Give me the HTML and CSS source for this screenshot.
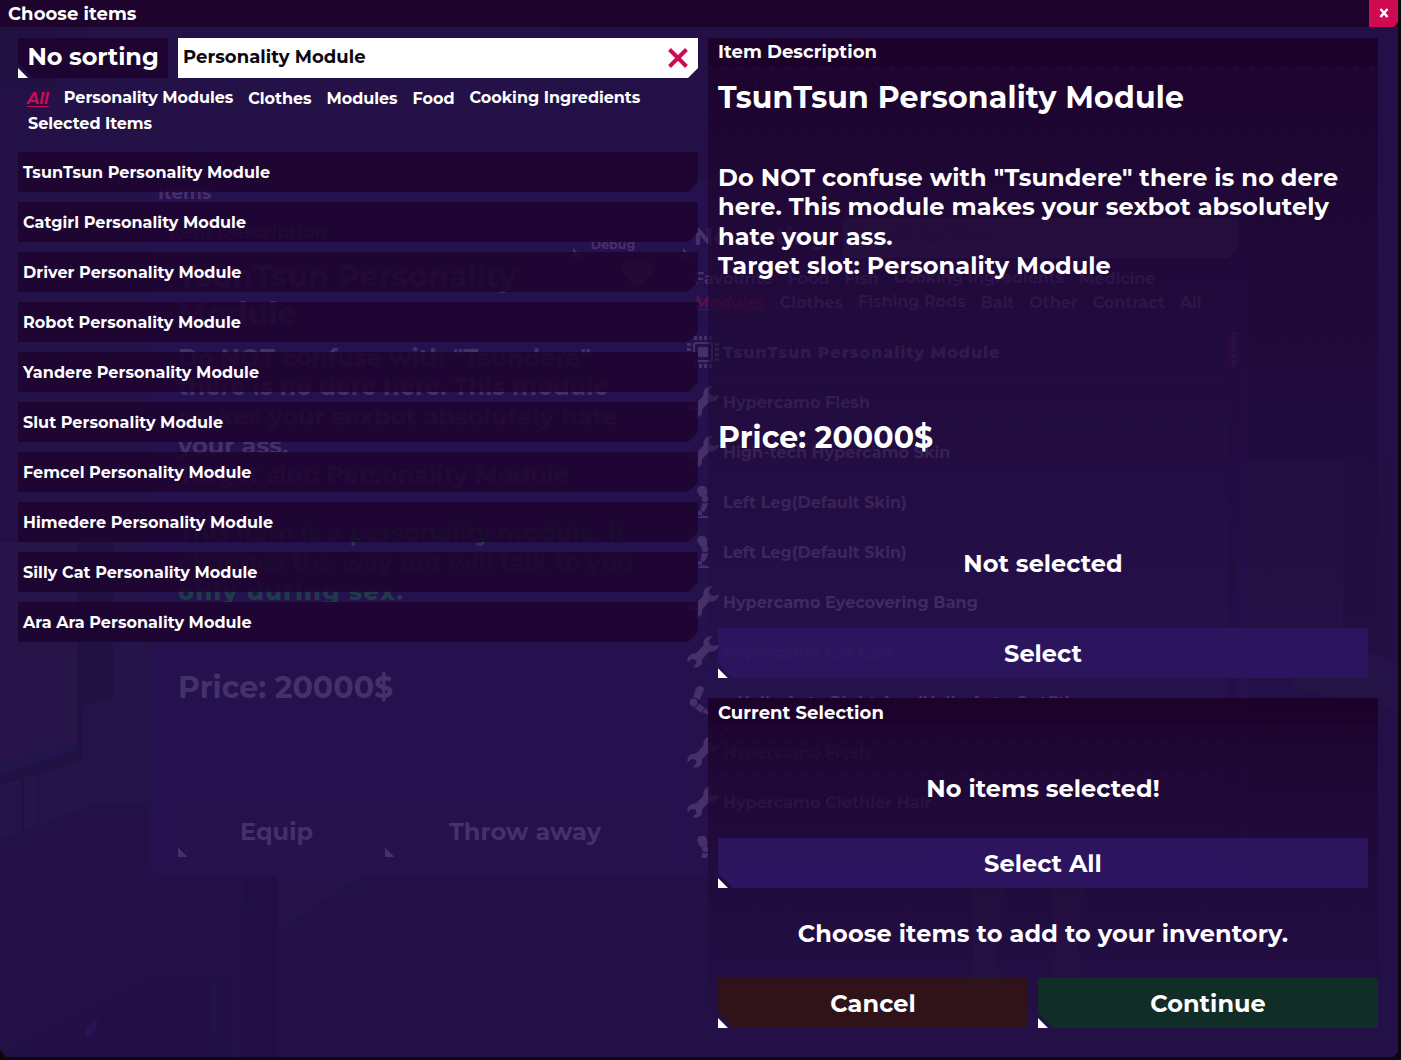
FILE: index.html
```html
<!DOCTYPE html>
<html lang="en">
<head>
<meta charset="utf-8">
<title>Choose items</title>
<link rel="stylesheet" href="styles.css">
</head>
<body>
<svg class="symbols" width="0" height="0" aria-hidden="true">
  <symbol id="wrench" viewBox="0 0 32 32">
    <path d="M32 8.500C31.500 13 27.500 16.500 22.500 15.500L15 23.500C16 28 13 32 7 31.500L5.500 31.500L9.500 27L8.500 23.500L4.500 23L0.500 26.500C-0.500 21 3 17 8 17.500L9.500 17L16.500 9.500C15.500 4.500 19 0 25.500 0L22 4.500L23 8.500L27 10Z"/>
  </symbol>
  <symbol id="chip" viewBox="0 0 32 32">
    <path fill-rule="evenodd" d="M9 6H23Q26 6 26 9V23Q26 26 23 26H9Q6 26 6 23V9Q6 6 9 6ZM9.500 8Q8 8 8 9.500V22.500Q8 24 9.500 24H22.500Q24 24 24 22.500V9.500Q24 8 22.500 8Z"/>
    <path d="M11 11H21V21H11Z"/>
    <path d="M7 0h3v4h-3zM12 0h3v4h-3zM17 0h3v4h-3zM22 0h3v4h-3zM7 28h3v4h-3zM12 28h3v4h-3zM17 28h3v4h-3zM22 28h3v4h-3zM0 7h4v3h-4zM0 12h4v3h-4zM0 17h4v3h-4zM0 22h4v3h-4zM28 7h4v3h-4zM28 12h4v3h-4zM28 17h4v3h-4zM28 22h4v3h-4z"/>
  </symbol>
  <symbol id="leg" viewBox="0 0 32 32">
    <path d="M10 4Q11-1 17 0Q20 1 20 5L20.500 9Q17 10 15.500 12Q11 9 10 4Z"/>
    <circle cx="18" cy="13" r="3.200"/>
    <path d="M15 17Q18 18 21 16.500Q21 22 16.500 26L13.500 24Q15 20 15 17Z"/>
    <circle cx="13" cy="27" r="2.300"/>
    <path d="M11 31Q13 29.500 16 29.500L22 30.500V32H11Z"/>
  </symbol>
  <symbol id="arm" viewBox="0 0 32 32">
    <path d="M8.500 3Q11-1 15 .3Q18 2 16.500 5L12.500 14Q10 11.500 6 11.500Z"/>
    <circle cx="6.500" cy="16.500" r="3.900"/>
    <path d="M7 22Q11 21 11.500 17.500L18 21.500Q14.500 23 15 27Z"/>
    <circle cx="18" cy="25" r="2.200"/>
    <path d="M18.500 28L21.500 23L27 31Z"/>
  </symbol>
</svg>

<div class="screen">
  <svg class="room" viewBox="0 0 1398 1057" aria-hidden="true">
    <path class="lit" d="M0 88H57L84 50V27H560V150H280L243 136L150 176V540H0Z" opacity=".35"/>
    <path class="shade" d="M0 27H57V88H0Z"/>
    <path class="lit" d="M0 542H77V750L0 775Z"/>
    <path class="blue" d="M0 763L77 742V750L0 774Z"/>
    <path class="shade" d="M77 542H113V697L83 706V760L0 785V775L77 750Z"/>
    <path class="lit" d="M83 706L113 697V542H149V802H98L0 840V785L83 760Z" opacity=".75"/>
    <path class="shade" d="M21 779H24V833L21 834ZM37 774H39V826L37 827Z"/>
    <path class="lit" d="M277 877H360L277 932Z" opacity=".7"/>
    <path class="shade" d="M243 877H277V1057H240V960Z" opacity=".7"/>
    <path class="shade" d="M160 976H232V1057H60L0 1057L50 1030Z" opacity=".5"/>
    <path class="glow" d="M86 1036Q83 1025 98 1020Q96 1034 90 1038Z"/>
    <path class="line" d="M214 980V1030L224 1042V1057"/>
    <path class="lit" d="M1248 460H1343V640L1398 665V710L1292 688V640H1248Z" opacity=".6"/>
    <path class="shade" d="M1343 466L1398 457V660L1343 645Z" opacity=".6"/>
    <path class="lit" d="M969 877H1004L996 960Q1010 1000 1004 1018Q984 1030 970 1004L974 950Z" opacity=".8"/>
    <path class="lit" d="M1050 877H1084L1078 950L1085 1000Q1076 1030 1060 1018Q1046 990 1056 950Z" opacity=".8"/>
  </svg>

  <section class="inventory">
    <header class="inventory-title">Items</header>
    <div class="inventory-body">
      <div class="inventory-info">
        <h4 class="info-label">Item Description</h4>
        <h3 class="info-name">TsunTsun Personality<br>Module</h3>
        <p class="info-text">Do NOT confuse with "Tsundere"<br>there is no dere here. This module<br>makes your sexbot absolutely hate<br>your ass.<br>Target slot: Personality Module</p>
        <p class="info-text info-green">This item is a personality module. It<br>changes the way bot will talk to you<br><b>only during sex.</b></p>
        <p class="info-price">Price: 20000$</p>
        <div class="info-actions"><span class="ghost-btn equip">Equip</span><span class="ghost-btn throw">Throw away</span></div>
        <span class="debug">Debug</span>
        <svg class="heart" viewBox="0 0 32 28"><path d="M16 28L2.500 15C-2 10 0 0 8.500 0Q13 0 16 4Q19 0 23.500 0C32 0 34 10 29.500 15Z"/></svg>
      </div>
      <div class="inventory-list">
        <div class="list-top"><span class="list-sort">No sorting</span><span class="list-search">Search for item</span></div>
        <div class="list-tabs"><span>Favourite</span><span>Food</span><span>Fish</span><span class="up">Cooking Ingredients</span><span>Medicine</span></div>
        <div class="list-tabs"><span class="picked">Modules</span><span>Clothes</span><span class="up">Fishing Rods</span><span>Bait</span><span>Other</span><span>Contract</span><span>All</span></div>
        <div class="list-rows">
          <div class="owned current"><svg><use href="#chip"/></svg>TsunTsun Personality Module</div>
          <div class="owned"><svg><use href="#wrench"/></svg>Hypercamo Flesh</div>
          <div class="owned"><svg><use href="#wrench"/></svg>High-tech Hypercamo Skin</div>
          <div class="owned"><svg><use href="#leg"/></svg>Left Leg(Default Skin)</div>
          <div class="owned"><svg><use href="#leg"/></svg>Left Leg(Default Skin)</div>
          <div class="owned"><svg><use href="#wrench"/></svg>Hypercamo Eyecovering Bang</div>
          <div class="owned"><svg><use href="#wrench"/></svg>Hypercamo Cat Ears</div>
          <div class="owned inset"><svg><use href="#arm"/></svg>Hello Auto Right Arm(Hello Auto Outfit)</div>
          <div class="owned"><svg><use href="#wrench"/></svg>Hypercamo Flesh</div>
          <div class="owned"><svg><use href="#wrench"/></svg>Hypercamo Clothier Hair</div>
          <div class="owned"><svg><use href="#leg"/></svg>Right Leg(Default Skin)</div>
        </div>
        <span class="scrollbar"><i></i></span>
      </div>
    </div>
  </section>

  <main class="dialog">
    <header class="titlebar">
      <h1>Choose items</h1>
      <button class="close" aria-label="Close"><svg viewBox="0 0 10 10"><path d="M1.500 1L8.500 9M8.500 1L1.500 9"/></svg></button>
    </header>
    <div class="columns">
      <section class="picker">
        <div class="toolbar">
          <button class="sort notch">No sorting</button>
          <div class="search"><span>Personality Module</span><svg viewBox="0 0 20 20"><path d="M1.500 1.500L18.500 18.500M18.500 1.500L1.500 18.500"/></svg></div>
        </div>
        <nav class="tabs">
          <a class="active">All</a><a class="up">Personality Modules</a><a>Clothes</a><a>Modules</a><a>Food</a><a class="up">Cooking Ingredients</a><a class="second">Selected Items</a>
        </nav>
        <ul class="items">
          <li>TsunTsun Personality Module</li>
          <li>Catgirl Personality Module</li>
          <li>Driver Personality Module</li>
          <li>Robot Personality Module</li>
          <li>Yandere Personality Module</li>
          <li>Slut Personality Module</li>
          <li>Femcel Personality Module</li>
          <li>Himedere Personality Module</li>
          <li>Silly Cat Personality Module</li>
          <li>Ara Ara Personality Module</li>
        </ul>
      </section>
      <section class="side">
        <article class="panel description">
          <h2>Item Description</h2>
          <h3>TsunTsun Personality Module</h3>
          <p class="text">Do NOT confuse with "Tsundere" there is no dere<br>here. This module makes your sexbot absolutely<br>hate your ass.<br>Target slot: Personality Module</p>
          <p class="price">Price: 20000$</p>
          <p class="status">Not selected</p>
          <button class="btn notch">Select</button>
        </article>
        <article class="panel selection">
          <h2>Current Selection</h2>
          <p class="status">No items selected!</p>
          <button class="btn notch">Select All</button>
          <p class="hint">Choose items to add to your inventory.</p>
          <div class="actions">
            <button class="btn cancel notch">Cancel</button>
            <button class="btn continue notch">Continue</button>
          </div>
        </article>
      </section>
    </div>
  </main>
</div>
</body>
</html>
```
FILE: styles.css
```css
* { box-sizing: border-box; margin: 0; padding: 0; }
body { background: #0a080c; font-family: Montserrat, Inter, sans-serif; font-weight: 700; color: #fff; letter-spacing: .05px; overflow: hidden; }
button { border: 0; background: none; font: inherit; color: inherit; letter-spacing: inherit; }
h1, h2, h3, h4 { font-weight: 700; }
ul { list-style: none; }
.symbols { position: absolute; }

.screen { position: relative; width: 1401px; height: 1060px; overflow: hidden; }
.room, .inventory, .dialog { position: absolute; }
.room { left: 0; top: 0; width: 1398px; height: 1057px; background: #231047; clip-path: polygon(0 0, 100% 0, 100% 1052px, 1393px 100%, 6px 100%, 0 1050px); }
.lit { fill: #271549; }
.shade { fill: #211042; }
.blue { fill: #21154c; }
.glow { fill: #281354; }
.line { fill: none; stroke: #271454; stroke-width: 1; }

/* inventory window, seen faintly behind the dialog */
.inventory { left: 149px; top: 180px; width: 1099px; height: 697px; background: #26114f; color: #46306a; clip-path: polygon(0 0, 100% 0, 100% 100%, 10px 100%, 0 687px); }
.inventory-title { height: 24px; line-height: 26px; padding-left: 9px; font-size: 18px; }
.inventory-body { display: flex; }
.inventory-info { position: relative; width: 538px; padding: 18px 0 0 29px; white-space: nowrap; }
.info-label { margin-left: -10px; height: 20px; line-height: 20px; font-size: 18px; }
.info-name { margin-top: 16px; font-size: 30px; line-height: 37px; letter-spacing: .2px; }
.info-text { margin-top: 11px; font-size: 24px; line-height: 29.3px; }
.info-green { margin-top: 29px; color: #1f3a49; }
.info-green b { font-weight: 800; letter-spacing: 1.400px; }
.info-price { margin-top: 63px; font-size: 30px; line-height: 38px; }
.info-actions { display: flex; gap: 10px; margin-top: 100px; }
.ghost-btn { position: relative; width: 197px; height: 50px; line-height: 50px; text-align: center; font-size: 24px; background: #25114b; }
.throw { width: 280px; line-height: 49px; }
.ghost-btn::after, .debug::before, .debug::after { content: ""; position: absolute; left: 0; bottom: 0; width: 10px; height: 10px; background: #46306a; clip-path: polygon(0 0, 100% 100%, 0 100%); }
.debug { position: absolute; left: 424px; top: 26px; width: 80px; height: 28px; line-height: 29px; text-align: center; font-size: 12.500px; }
.debug::after { left: 110px; }
.heart { position: absolute; left: 472px; top: 56px; width: 32px; height: 28px; fill: #46306a; }
.inventory-list { position: relative; width: 561px; padding-top: 14px; white-space: nowrap; }
.list-top { display: flex; height: 40px; line-height: 38px; }
.list-sort { width: 156px; padding-left: 7px; font-size: 24px; }
.list-search { width: 395px; padding-left: 6px; font-size: 18px; background: #36255b; color: #301f57; clip-path: polygon(0 0, 100% 0, 100% 30px, 385px 100%, 0 100%); }
.list-tabs { display: flex; gap: 15px; height: 24px; line-height: 24px; padding-left: 7px; font-size: 16px; letter-spacing: -.05px; }
.list-top + .list-tabs { margin-top: 9px; }
.list-tabs .up { margin-top: -1px; }
.list-tabs .picked { color: #58104a; font-style: italic; text-decoration: underline; }
.list-rows { display: flex; flex-direction: column; gap: 10px; margin-top: 17px; height: 540px; }
.owned { display: flex; flex: none; align-items: center; gap: 4px; width: 536px; height: 40px; font-size: 16px; background: #25114b; }
.owned:last-child { clip-path: inset(0 0 14px 0); }
.owned svg { flex: none; width: 32px; height: 32px; fill: #46306a; }
.current { font-weight: 800; letter-spacing: 1px; }
.inset { gap: 18px; }
.scrollbar { position: absolute; left: 541px; top: 128px; width: 10px; height: 526px; background: #240f48; }
.scrollbar i { display: block; width: 12px; height: 35px; background: radial-gradient(circle, #27285b 2px, transparent 3px) 0 9px / 12px 6px #350f4b; clip-path: polygon(0 0, 100% 0, 100% 30px, 7px 100%, 0 100%); }

.dialog { left: 0; top: 0; width: 1398px; height: 1057px; }
.titlebar { display: flex; justify-content: space-between; height: 27px; background: #1e032c; }
h1 { padding-left: 8px; font-size: 18px; line-height: 28px; }
.close { display: grid; place-items: center; width: 29px; height: 27px; background: #cf0a50; clip-path: polygon(0 0, 100% 0, 100% 22px, 25px 100%, 0 100%); }
.close svg { width: 10px; height: 10px; margin-top: -2px; fill: none; stroke: #fff; stroke-width: 2.500; }
.columns { display: flex; gap: 10px; padding: 11px 20px 0 18px; white-space: nowrap; }
.picker { width: 680px; }
.toolbar { display: flex; gap: 10px; height: 40px; }

/* button shape: cut lower-left corner carrying a white marker */
.notch { position: relative; z-index: 0; }
.notch::before { content: ""; position: absolute; inset: 0; z-index: -1; background: var(--face); clip-path: polygon(0 0, 100% 0, 100% 100%, 15px 100%, 0 calc(100% - 15px)); }
.notch::after { content: ""; position: absolute; left: 0; bottom: 0; width: 10px; height: 10px; background: #fff; clip-path: polygon(0 0, 100% 100%, 0 100%); }
.sort { --face: rgba(29, 4, 46, .85); width: 150px; padding-bottom: 3px; font-size: 24px; line-height: 37px; letter-spacing: -.1px; }
.search { display: flex; justify-content: space-between; align-items: center; width: 520px; padding: 0 10px 0 5px; background: #fff; color: #0c0710; font-size: 18px; clip-path: polygon(0 0, 100% 0, 100% 30px, 510px 100%, 0 100%); }
.search span { margin-top: -2px; }
.search svg { width: 20px; height: 20px; fill: none; stroke: #cf0a50; stroke-width: 4; }
.tabs { display: flex; flex-wrap: wrap; column-gap: 15px; padding: 8px 0 0 9px; height: 74px; align-content: flex-start; font-size: 16px; line-height: 25px; letter-spacing: -.03px; }
.tabs .up { margin-top: -1px; }
.tabs .active { color: #cf0a50; font-style: italic; text-decoration: underline; text-underline-offset: 2px; }
.tabs .second { padding-left: 1px; }
.items { display: flex; flex-direction: column; gap: 10px; }
.items li { height: 40px; padding-left: 5px; line-height: 41px; font-size: 16px; background: rgba(29, 4, 46, .86); clip-path: polygon(0 0, 100% 0, 100% 30px, 670px 100%, 0 100%); }

.side { display: flex; flex-direction: column; gap: 10px; width: 670px; }
.panel { position: relative; z-index: 0; display: flex; flex-direction: column; padding-left: 10px; background: linear-gradient(rgba(29, 3, 44, .96), rgba(30, 5, 48, .82) 20%, rgba(35, 16, 71, 0)); }
.panel::before { content: ""; position: absolute; inset: 28px 0 0 0; z-index: -1; background: radial-gradient(circle, #2a0c55 .7px, transparent 1.400px) -4px -5px / 15px 15px; mask-image: linear-gradient(rgba(0, 0, 0, .8), transparent 70%); }
.description { height: 650px; }
.selection { height: 330px; }
.panel h2 { height: 28px; line-height: 28px; margin-left: -10px; padding-left: 10px; font-size: 18px; background: rgba(29, 2, 42, .7); }
.panel.selection h2 { line-height: 31px; }
.panel h3 { margin-top: 12px; height: 38px; line-height: 39px; font-size: 30px; letter-spacing: .2px; }
.text { margin-top: 47px; font-size: 24px; line-height: 29.300px; letter-spacing: .1px; }
.price { margin-top: 138px; height: 38px; font-size: 30px; line-height: 39px; }
.status, .hint { width: 650px; height: 30px; line-height: 30px; text-align: center; font-size: 24px; }
.hint { letter-spacing: .12px; }
.description .status { margin-top: 93px; }
.btn { --face: rgba(46, 22, 98, .9); width: 650px; height: 50px; line-height: 51px; text-align: center; font-size: 24px; }
.description .btn { margin-top: 49px; }
.selection .status { margin-top: 48px; }
.selection > .btn { margin-top: 34px; }
.hint { margin-top: 31px; }
.actions { display: flex; gap: 10px; margin-top: 29px; }
.actions .cancel { --face: rgba(49, 20, 24, .97); width: 310px; }
.actions .continue { --face: rgba(17, 46, 38, .97); width: 340px; }
```
